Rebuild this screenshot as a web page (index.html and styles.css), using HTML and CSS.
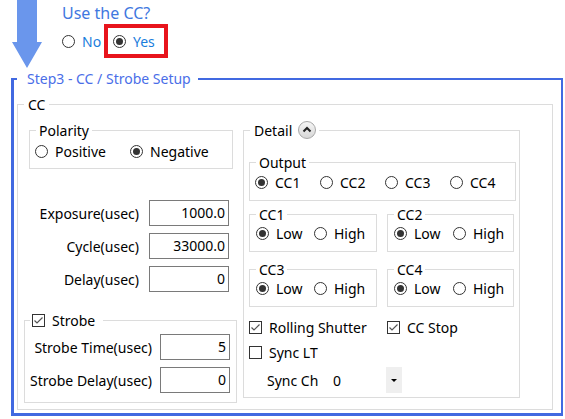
FILE: index.html
```html
<!DOCTYPE html>
<html>
<head>
<meta charset="utf-8">
<link rel="stylesheet" href="styles.css">
</head>
<body>
<header class="top">
  <svg class="arrow" width="32" height="68" viewBox="0 0 32 68"><path d="M5 0H25V42H30L15 68L0 42H5Z" fill="#6a96ec"/></svg>
  <div class="question">
    <div class="q-title">Use the CC?</div>
    <div class="q-options">
      <div class="opt q-no"><span class="radio"></span><span>No</span></div>
      <div class="opt q-yes"><span class="radio checked"></span><span>Yes</span></div>
    </div>
  </div>
</header>

<section class="frame">
  <div class="frame-title">Step3 - CC / Strobe Setup</div>
  <div class="group cc">
    <div class="group-title cc-title">CC</div>

    <div class="left">
      <div class="group polarity">
        <div class="group-title">Polarity</div>
        <div class="radios pol-radios">
          <div class="opt w95"><span class="radio"></span><span>Positive</span></div>
          <div class="opt"><span class="radio checked"></span><span>Negative</span></div>
        </div>
      </div>

      <div class="fields">
        <div class="field-row"><span>Exposure(usec)</span><div class="input">1000.0</div></div>
        <div class="field-row"><span>Cycle(usec)</span><div class="input">33000.0</div></div>
        <div class="field-row"><span>Delay(usec)</span><div class="input">0</div></div>
      </div>

      <div class="group strobe">
        <div class="group-title strobe-title"><span class="check checked"><svg width="11" height="11" viewBox="0 0 11 11"><polyline points="1.5,5.5 4,8 9.5,2.5" fill="none" stroke="#555" stroke-width="1.2"/></svg></span><span>Strobe</span></div>
        <div class="field-row s-row"><span>Strobe Time(usec)</span><div class="input small">5</div></div>
        <div class="field-row s-row"><span>Strobe Delay(usec)</span><div class="input small">0</div></div>
      </div>
    </div>

    <div class="group detail">
      <div class="group-title detail-title"><span>Detail</span><span class="toggle"><svg width="18" height="18" viewBox="0 0 18 18"><defs><linearGradient id="g" x1="0" y1="0" x2="0" y2="1"><stop offset="0" stop-color="#f7f7f7"/><stop offset="1" stop-color="#d6d6d6"/></linearGradient></defs><circle cx="9" cy="9" r="8.5" fill="url(#g)" stroke="#a8a8a8"/><polyline points="5.5,10.5 9,7 12.5,10.5" fill="none" stroke="#222" stroke-width="2"/></svg></span></div>

      <div class="group output">
        <div class="group-title">Output</div>
        <div class="radios out-radios">
          <div class="opt w65"><span class="radio checked"></span><span>CC1</span></div>
          <div class="opt w65"><span class="radio"></span><span>CC2</span></div>
          <div class="opt w65"><span class="radio"></span><span>CC3</span></div>
          <div class="opt"><span class="radio"></span><span>CC4</span></div>
        </div>
      </div>

      <div class="pair">
        <div class="group level">
          <div class="group-title">CC1</div>
          <div class="radios lv-radios">
            <div class="opt w58"><span class="radio checked"></span><span>Low</span></div>
            <div class="opt"><span class="radio"></span><span>High</span></div>
          </div>
        </div>
        <div class="group level">
          <div class="group-title">CC2</div>
          <div class="radios lv-radios">
            <div class="opt w59"><span class="radio checked"></span><span>Low</span></div>
            <div class="opt"><span class="radio"></span><span>High</span></div>
          </div>
        </div>
      </div>
      <div class="pair pair2">
        <div class="group level">
          <div class="group-title">CC3</div>
          <div class="radios lv-radios">
            <div class="opt w58"><span class="radio checked"></span><span>Low</span></div>
            <div class="opt"><span class="radio"></span><span>High</span></div>
          </div>
        </div>
        <div class="group level">
          <div class="group-title">CC4</div>
          <div class="radios lv-radios">
            <div class="opt w59"><span class="radio checked"></span><span>Low</span></div>
            <div class="opt"><span class="radio"></span><span>High</span></div>
          </div>
        </div>
      </div>

      <div class="checks">
        <div class="opt w138"><span class="check checked"><svg width="11" height="11" viewBox="0 0 11 11"><polyline points="1.5,5.5 4,8 9.5,2.5" fill="none" stroke="#555" stroke-width="1.2"/></svg></span><span>Rolling Shutter</span></div>
        <div class="opt"><span class="check checked"><svg width="11" height="11" viewBox="0 0 11 11"><polyline points="1.5,5.5 4,8 9.5,2.5" fill="none" stroke="#555" stroke-width="1.2"/></svg></span><span>CC Stop</span></div>
      </div>
      <div class="checks sync">
        <div class="opt"><span class="check"></span><span>Sync LT</span></div>
      </div>
      <div class="sync-ch">
        <span class="sync-label">Sync Ch</span>
        <span class="combo-value">0</span>
        <span class="combo-btn"></span>
      </div>
    </div>
  </div>
</section>
</body>
</html>
```

FILE: styles.css
```css
* { box-sizing: border-box; }
html, body { margin: 0; padding: 0; background: #fff; }
body {
  width: 565px;
  height: 419px;
  overflow: hidden;
  font-family: "Noto Sans", "Liberation Sans", sans-serif;
  font-size: 14px;
  line-height: 17px;
  color: #000;
}

/* top question */
.top { display: flex; height: 78px; }
.arrow { margin-left: 12px; flex: none; }
.question { margin-left: 18px; }
.q-title { color: #3f78e0; font-size: 16px; line-height: 18px; margin-top: 4px; }
.q-options { display: flex; align-items: center; margin-top: 2px; color: #1a7ddc; }
.q-no { width: 42px; }
.q-yes { border: 4px solid #e8141c; height: 34px; padding: 0 9px 0 5px; }

/* generic controls */
.opt { display: flex; align-items: center; gap: 7px; flex: none; }
.w95 { width: 95px; }
.w65 { width: 65px; }
.w58 { width: 58px; }
.w59 { width: 59px; }
.w138 { width: 138px; }

.radio {
  position: relative;
  flex: none;
  width: 13px;
  height: 13px;
  border: 1px solid #333;
  border-radius: 50%;
  background: #fff;
}
.radio.checked::after {
  content: "";
  position: absolute;
  left: 2px;
  top: 2px;
  width: 7px;
  height: 7px;
  border-radius: 50%;
  background: #333;
}
.check {
  flex: none;
  display: flex;
  width: 13px;
  height: 13px;
  border: 1px solid #333;
  background: #fff;
}

.input {
  flex: none;
  width: 80px;
  height: 26px;
  border: 1px solid #7a7a7a;
  text-align: right;
  padding-right: 3px;
  line-height: 24px;
}
.input.small { width: 70px; }

/* group boxes */
.group { position: relative; border: 1px solid #dcdcdc; }
.group-title {
  position: absolute;
  top: -9px;
  left: 6px;
  padding: 0 3px;
  background: #fff;
  line-height: 17px;
  display: flex;
  align-items: center;
  white-space: nowrap;
}

/* frame */
.frame {
  position: relative;
  margin-left: 11px;
  width: 552px;
  height: 338px;
  border: solid #4169e1;
  border-width: 2px 2px 3px 3px;
  padding: 24px 8px 3px 3px;
}
.frame-title {
  position: absolute;
  top: -10px;
  left: 3px;
  padding: 0 7px 0 10px;
  background: #fff;
  color: #4a6ee8;
  line-height: 18px;
}

.cc { height: 100%; display: flex; gap: 6px; padding: 25px 0 0 6px; }
.cc-title { left: 6px; padding: 0 4px; }

.left { width: 213px; display: flex; flex-direction: column; }
.polarity { margin-left: 5px; width: 204px; height: 39px; }
.radios { display: flex; align-items: center; }
.pol-radios { padding: 12px 0 0 5px; }

.fields { display: flex; flex-direction: column; gap: 7px; margin-top: 31px; }
.field-row {
  display: flex;
  justify-content: flex-end;
  align-items: center;
  gap: 10px;
  padding-right: 8px;
  height: 26px;
}

.strobe { margin-top: 28px; height: 83px; padding: 13px 6px 0 0; display: flex; flex-direction: column; gap: 7px; }
.strobe-title { left: 5px; padding: 0 8px 0 2px; gap: 7px; }
.s-row { gap: 8px; padding-right: 0; }

/* detail */
.detail { width: 277px; height: 268px; padding: 31px 3px 0 5px; }
.detail-title { left: 6px; padding: 0 3px 0 4px; height: 18px; top: -10px; }
.toggle { display: flex; margin-left: 6px; }

.output { height: 39px; }
.out-radios { padding: 11px 0 0 5px; }

.pair { display: flex; gap: 10px; margin-top: 13px; }
.pair2 { margin-top: 17px; }
.level { width: 128px; height: 38px; }
.level + .level { width: 127px; }
.lv-radios { padding: 10px 0 0 6px; }

.checks { display: flex; margin-top: 12px; }
.checks.sync { margin-top: 8px; }

.sync-ch { display: flex; align-items: center; height: 26px; margin-top: 6px; padding-left: 18px; }
.sync-label { width: 66px; }
.combo-value { width: 53px; }
.combo-btn {
  position: relative;
  width: 16px;
  height: 26px;
  background: #efefef;
}
.combo-btn::after {
  content: "";
  position: absolute;
  left: 5px;
  top: 12px;
  border-left: 3px solid transparent;
  border-right: 3px solid transparent;
  border-top: 3px solid #000;
}
```
